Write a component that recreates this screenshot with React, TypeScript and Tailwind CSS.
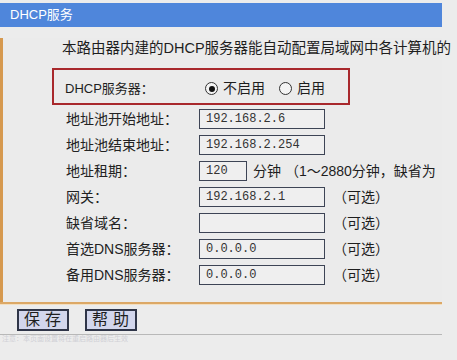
import React from "react";

const FONT = { fontFamily: '"Liberation Sans","Noto Sans CJK SC",sans-serif' };
const MONO = { fontFamily: '"Liberation Mono","Noto Sans CJK SC",monospace' };

type Row = { label: string; value: string; short?: boolean; after: string };

const rows: Row[] = [
    { label: "地址池开始地址：", value: "192.168.2.6", after: "" },
    { label: "地址池结束地址：", value: "192.168.2.254", after: "" },
    { label: "地址租期：", value: "120", short: true, after: "分钟 （1～2880分钟，缺省为" },
    { label: "网关：", value: "192.168.2.1", after: "（可选）" },
    { label: "缺省域名：", value: "", after: "（可选）" },
    { label: "首选DNS服务器：", value: "0.0.0.0", after: "（可选）" },
    { label: "备用DNS服务器：", value: "0.0.0.0", after: "（可选）" },
];

const Radio = ({ checked }: { checked?: boolean }) => (
    <span className="w-[13px] h-[13px] rounded-full border-[1.5px] border-[#333] bg-[#f4f4f4] flex items-center justify-center shrink-0">
        {checked && <span className="w-[6px] h-[6px] rounded-full bg-[#111]" />}
    </span>
);

export default function App() {
    return (
        <div className="w-[457px] h-[360px] bg-[#ececec] overflow-hidden text-[#1e1e1e]" style={FONT}>
            <div className="w-[442px] pt-[3px]">
                <div className="h-[24px] bg-[#4f86db] text-white text-[13px] pl-[10px] flex items-center">
                    DHCP服务
                </div>
                <div className="border-l-[3px] border-[#d6994f] bg-[#ebebeb] pb-[17px]">
                    <div className="mt-[11px] pl-[59px] h-[20px] leading-[20px] text-[14.5px] whitespace-nowrap">
                        本路由器内建的DHCP服务器能自动配置局域网中各计算机的
                    </div>
                    <div className="mt-[10px] ml-[49px] w-[298px] h-[37px] border-2 border-[#a8282c] flex items-center pl-[11px] pt-[4px] text-[14px]">
                        <span className="w-[140px] text-[13px]">DHCP服务器：</span>
                        <Radio checked />
                        <span className="ml-[5px]">不启用</span>
                        <span className="ml-[14px]" />
                        <Radio />
                        <span className="ml-[5px]">启用</span>
                    </div>
                    <div className="mt-[4px] flex flex-col gap-[6px]">
                        {rows.map((r) => (
                            <div key={r.label} className="h-[20px] flex items-center whitespace-nowrap text-[14px]">
                                <span className="pl-[63px] w-[196px] shrink-0 text-[#222]">{r.label}</span>
                                <span
                                    className={`${r.short ? "w-[48px]" : "w-[126px]"} shrink-0 h-[20px] border border-[#3d4455] bg-[#efefef] pl-[6px] flex items-center text-[12px] text-[#333]`}
                                    style={MONO}
                                >
                                    {r.value}
                                </span>
                                <span className={r.short ? "ml-[6px]" : "ml-[8px]"}>{r.after}</span>
                            </div>
                        ))}
                    </div>
                </div>
                <div className="h-[2px] bg-[#dca866]" />
                <div className="h-[1px] bg-[#f3dfc0]" />
                <div className="mt-[4px] pl-[17px] flex gap-[16px]">
                    <button className="w-[52px] h-[22px] border-2 border-[#2f3548] bg-[#d2d6ec] text-[16px] tracking-[5px] pl-[4px] leading-none flex items-center justify-center">
                        保存
                    </button>
                    <button className="w-[52px] h-[22px] border-2 border-[#2f3548] bg-[#d2d6ec] text-[16px] tracking-[5px] pl-[4px] leading-none flex items-center justify-center">
                        帮助
                    </button>
                </div>
                <div className="mt-[3px] h-[1px] bg-[#b8b8b8]" />
                <div className="h-[8px] text-[7px] leading-[8px] text-[#d0d0d6] pl-[2px] whitespace-nowrap">
                    注意：本页面设置将在重启路由器后生效
                </div>
            </div>
        </div>
    );
}
